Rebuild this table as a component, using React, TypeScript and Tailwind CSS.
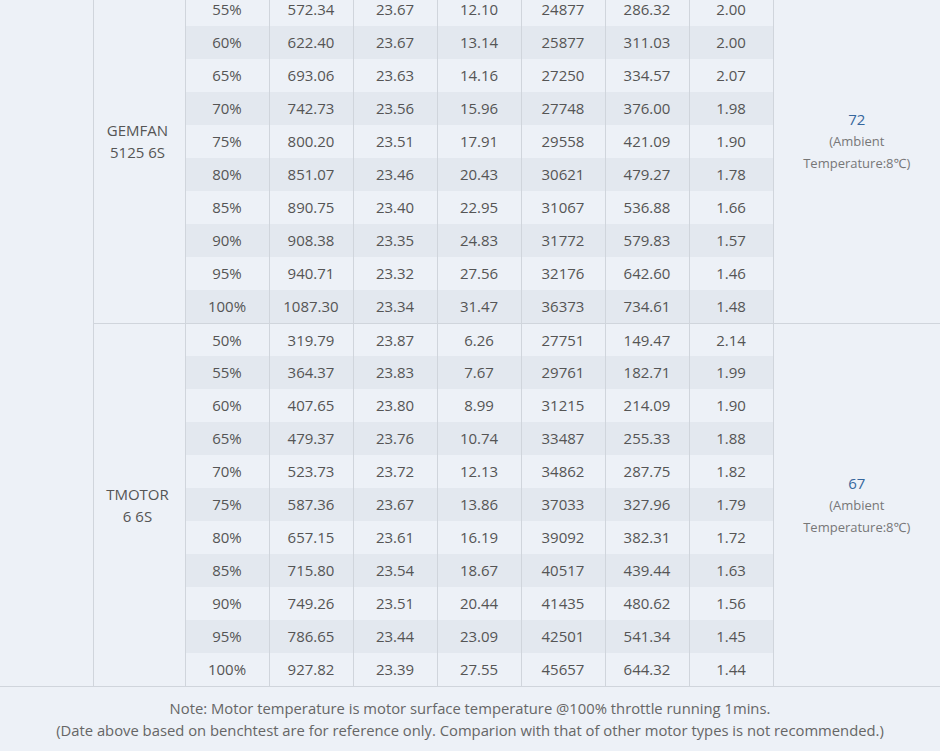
import React from 'react';

type Row = [string, string, string, string, string, string, string];

const GEMFAN: Row[] = [
  ['50%', '521.06', '23.70', '11.02', '23901', '261.17', '2.00'],
  ['55%', '572.34', '23.67', '12.10', '24877', '286.32', '2.00'],
  ['60%', '622.40', '23.67', '13.14', '25877', '311.03', '2.00'],
  ['65%', '693.06', '23.63', '14.16', '27250', '334.57', '2.07'],
  ['70%', '742.73', '23.56', '15.96', '27748', '376.00', '1.98'],
  ['75%', '800.20', '23.51', '17.91', '29558', '421.09', '1.90'],
  ['80%', '851.07', '23.46', '20.43', '30621', '479.27', '1.78'],
  ['85%', '890.75', '23.40', '22.95', '31067', '536.88', '1.66'],
  ['90%', '908.38', '23.35', '24.83', '31772', '579.83', '1.57'],
  ['95%', '940.71', '23.32', '27.56', '32176', '642.60', '1.46'],
  ['100%', '1087.30', '23.34', '31.47', '36373', '734.61', '1.48'],
];

const TMOTOR: Row[] = [
  ['50%', '319.79', '23.87', '6.26', '27751', '149.47', '2.14'],
  ['55%', '364.37', '23.83', '7.67', '29761', '182.71', '1.99'],
  ['60%', '407.65', '23.80', '8.99', '31215', '214.09', '1.90'],
  ['65%', '479.37', '23.76', '10.74', '33487', '255.33', '1.88'],
  ['70%', '523.73', '23.72', '12.13', '34862', '287.75', '1.82'],
  ['75%', '587.36', '23.67', '13.86', '37033', '327.96', '1.79'],
  ['80%', '657.15', '23.61', '16.19', '39092', '382.31', '1.72'],
  ['85%', '715.80', '23.54', '18.67', '40517', '439.44', '1.63'],
  ['90%', '749.26', '23.51', '20.44', '41435', '480.62', '1.56'],
  ['95%', '786.65', '23.44', '23.09', '42501', '541.34', '1.45'],
  ['100%', '927.82', '23.39', '27.55', '45657', '644.32', '1.44'],
];

const GROUPS = [
  { name: ['GEMFAN', '5125 6S'], temp: '72', rows: GEMFAN },
  { name: ['TMOTOR', '6 6S'], temp: '67', rows: TMOTOR },
];

export default function App() {
  let idx = 0;
  return (
    <div
      className="w-[940px] h-[751px] overflow-hidden bg-[#edf1f7] text-[#555]"
      style={{ fontFamily: '"Open Sans", "Noto Sans", sans-serif' }}
    >
      {/* table is scrolled: the first row (GEMFAN 50%) sits above the viewport */}
      <table className="-mt-[40px] w-[940px] table-fixed border-collapse text-[15px]">
        <colgroup>
          <col className="w-[93px]" />
          <col className="w-[92px]" />
          {[0, 1, 2, 3, 4, 5, 6].map((i) => (
            <col key={i} className="w-[84px]" />
          ))}
          <col className="w-[167px]" />
        </colgroup>
        <tbody>
          {GROUPS.map((g, gi) =>
            g.rows.map((r, ri) => {
              const dark = idx % 2 === 0;
              idx++;
              const last = ri === g.rows.length - 1;
              return (
                <tr key={`${gi}-${ri}`} className={dark ? 'bg-[#e3e8ef]' : ''}>
                  {gi === 0 && ri === 0 && (
                    <td
                      rowSpan={22}
                      className="bg-[#edf1f7] border-r border-b border-[#d0d5dc]"
                    />
                  )}
                  {ri === 0 && (
                    <td
                      rowSpan={g.rows.length}
                      className="bg-[#edf1f7] border-r border-b border-[#d0d5dc] pr-[3px] text-center align-middle leading-[22px]"
                    >
                      {g.name[0]}
                      <br />
                      {g.name[1]}
                    </td>
                  )}
                  {r.map((v, ci) => (
                    <td
                      key={ci}
                      className={`h-[33px] p-0 text-center border-r border-[#d0d5dc] ${last ? 'border-b' : ''}`}
                    >
                      {v}
                    </td>
                  ))}
                  {ri === 0 && (
                    <td
                      rowSpan={g.rows.length}
                      className="bg-[#edf1f7] border-b border-[#d0d5dc] text-center align-middle px-6"
                    >
                      <div className="text-[15px] leading-[22px] text-[#36679d]">{g.temp}</div>
                      <div className="text-[13px] leading-[22px] text-[#777]">
                        (Ambient Temperature:8℃)
                      </div>
                    </td>
                  )}
                </tr>
              );
            })
          )}
        </tbody>
      </table>
      <div className="pt-[10px] text-center text-[14.8px] leading-[22px] text-[#666]">
        <p>Note: Motor temperature is motor surface temperature @100% throttle running 1mins.</p>
        <p>
          (Date above based on benchtest are for reference only. Comparion with that of other motor
          types is not recommended.)
        </p>
      </div>
    </div>
  );
}
